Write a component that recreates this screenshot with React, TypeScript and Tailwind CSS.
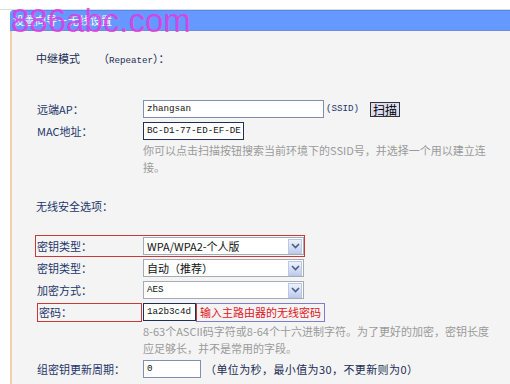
import type { ReactNode } from 'react';

const label = 'text-[11px] leading-[20px] text-[#1c356a]';
const mono = "whitespace-nowrap font-['Liberation_Mono',monospace] text-[9.2px]";

function Chevron() {
  return (
    <svg width="9" height="6" viewBox="0 0 9 6">
      <path d="M1 1l3.5 3.5L8 1" fill="none" stroke="#4a5f86" strokeWidth="1.6" />
    </svg>
  );
}

function Select({ value, ascii }: { value: string; ascii?: boolean }) {
  return (
    <div className="flex h-[18px] w-[161px] items-center border border-[#a5acb5] bg-white">
      <span className={`flex-1 pl-[3px] leading-[16px] text-[#111] ${ascii ? mono : 'text-[11px]'}`}>{value}</span>
      <span className="mr-px flex h-[15px] w-[14px] items-center justify-center border border-[#b9c8e6] bg-gradient-to-b from-[#eef2fc] to-[#bfcdec]">
        <Chevron />
      </span>
    </div>
  );
}

function Row({ name, boxed, children }: { name: string; boxed?: boolean; children: ReactNode }) {
  return (
    <div
      className={`ml-[23px] flex h-[22px] w-fit items-center border ${boxed ? 'border-[#c83a3a]' : 'border-transparent'}`}
    >
      <div className={`w-[107px] pl-px ${label}`}>{name}</div>
      {children}
    </div>
  );
}

export default function App() {
  return (
    <div className="relative h-[384px] w-[510px] overflow-hidden bg-white font-['Noto_Sans_CJK_SC',sans-serif]">
      <div className="h-[10px] border-b border-[#dcdcdc]" />
      <div className="ml-[10px] flex h-[21px] items-center rounded-tl-[4px] border-y border-t-[#5a86e6] border-b-[#6b8fd6] bg-[#6699ff] pl-[3px] text-[11px] text-white">
        设置向导－无线设置
      </div>
      <div className="ml-[10px] h-[353px] border-l-2 border-[#f0cfae] bg-[#f4f4f4]">
        <div className="ml-[24px] pt-[17px] text-[11px] leading-[20px] text-[#1a2c55]">
          中继模式
          <span className="ml-[18px]">
            （<span className={mono}>Repeater</span>）：
          </span>
        </div>

        <div className="mt-[27px]">
          <Row name="远端AP：">
            <div className={`h-[18px] w-[181px] border border-[#7f8fb0] bg-white pl-[3px] leading-[16px] text-[#111] ${mono}`}>
              zhangsan
            </div>
            <span className={`ml-[2px] text-[#1c356a] ${mono}`}>(SSID)</span>
            <button
              type="button"
              className="ml-[11px] h-[15px] w-[30px] border border-[#333] bg-[#dcdcf2] text-[12px] leading-[13px] text-black"
            >
              扫描
            </button>
          </Row>
          <Row name="MAC地址：">
            <div className={`h-[18px] w-[101px] border border-[#1f2f55] bg-white pl-[3px] leading-[16px] text-[#111] ${mono}`}>
              BC-D1-77-ED-EF-DE
            </div>
          </Row>
          <div className="ml-[131px] text-[11px] leading-[17px] text-[#9a9a9a]">
            <p>你可以点击扫描按钮搜索当前环境下的SSID号，并选择一个用以建立连</p>
            <p>接。</p>
          </div>
        </div>

        <div className={`ml-[24px] mt-[20px] ${label}`}>无线安全选项：</div>

        <div className="mt-[19px]">
          <Row name="密钥类型：" boxed>
            <Select value="WPA/WPA2-个人版" />
          </Row>
          <Row name="密钥类型：">
            <Select value="自动（推荐）" />
          </Row>
          <Row name="加密方式：">
            <Select value="AES" ascii />
          </Row>
          <div className="ml-[25px] flex h-[22px] items-center">
            <div className={`h-[19px] w-[105px] border border-[#c83a3a] pl-[1px] !leading-[17px] ${label}`}>密码：</div>
            <div className={`ml-px h-[18px] w-[53px] border border-[#1f2f55] bg-white pl-[3px] leading-[16px] text-[#111] ${mono}`}>
              1a2b3c4d
            </div>
            <div className="h-[19px] border border-[#7d7dcc] border-l-[#c83a3a] px-[3px] text-[11px] leading-[17px] text-[#e0141e]">
              输入主路由器的无线密码
            </div>
          </div>
        </div>

        <div className="ml-[131px] text-[11px] leading-[17px] text-[#9a9a9a]">
          <p>8-63个ASCII码字符或8-64个十六进制字符。为了更好的加密，密钥长度</p>
          <p>应足够长，并不是常用的字段。</p>
        </div>

        <div className="mt-[1px]">
          <Row name="组密钥更新周期：">
            <div className={`h-[18px] w-[58px] border border-[#7f8fb0] bg-white pl-[3px] leading-[16px] text-[#111] ${mono}`}>
              0
            </div>
            <span className="ml-[4px] text-[11px] tracking-[0.4px] text-[#1a2c55]">（单位为秒，最小值为30，不更新则为0）</span>
          </Row>
        </div>
      </div>

      <div className="pointer-events-none absolute left-[11px] top-[1px] font-['Liberation_Sans',sans-serif] text-[33px] leading-[40px] text-[#e03be0]/85">
        886abc.com
      </div>
    </div>
  );
}
